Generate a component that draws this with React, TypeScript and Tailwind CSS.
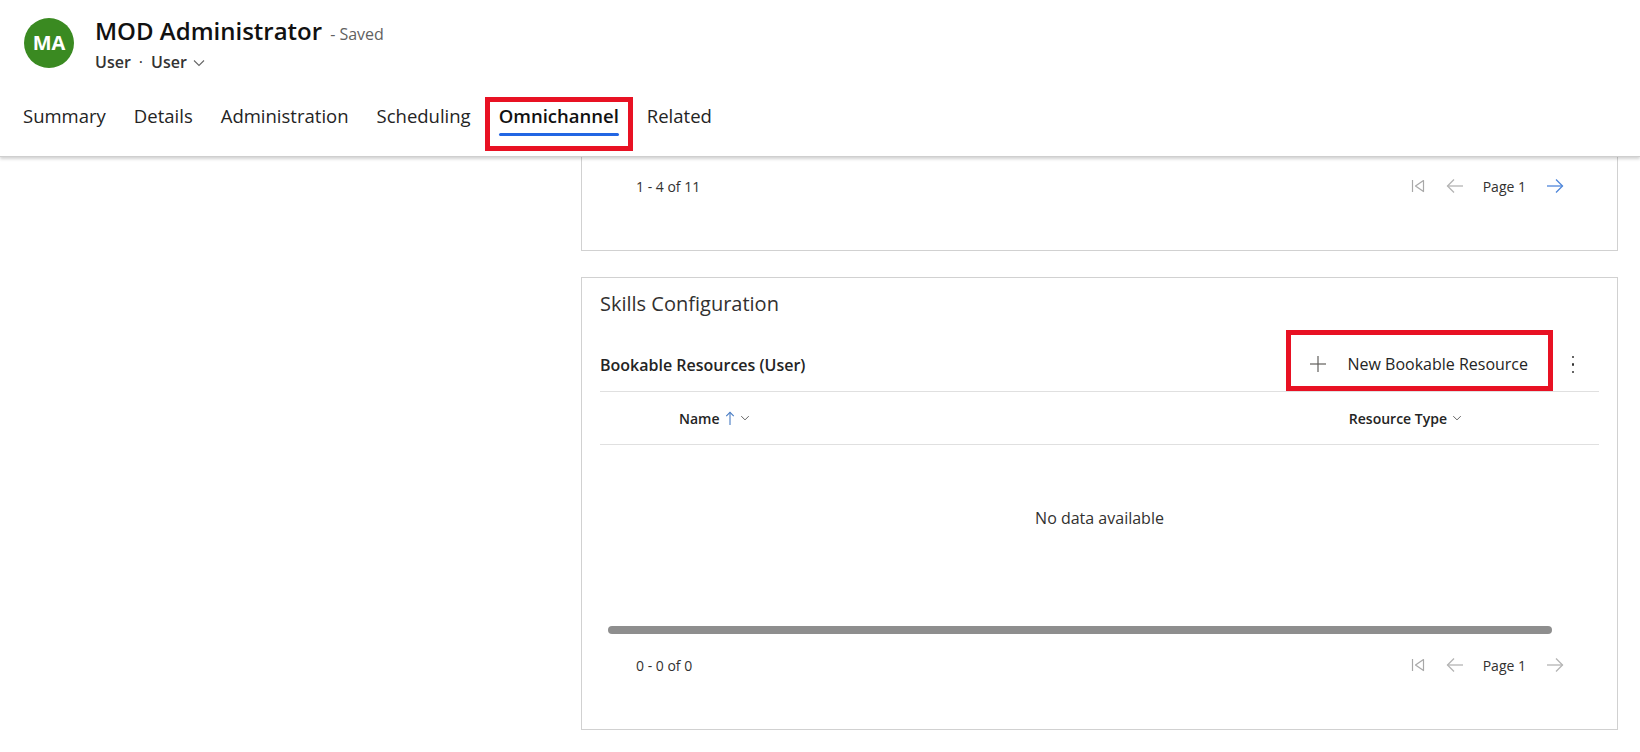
import React from 'react'

const tabs = ['Summary', 'Details', 'Administration', 'Scheduling', 'Omnichannel', 'Related']

const font = { fontFamily: '"Open Sans", "Noto Sans", sans-serif' }

function Chevron({ className = '' }: { className?: string }) {
  return (
    <svg viewBox="0 0 12 8" className={className} fill="none" stroke="currentColor" strokeWidth="1.1">
      <polyline points="1,1.5 6,6.5 11,1.5" />
    </svg>
  )
}

function Pager({ nextEnabled }: { nextEnabled: boolean }) {
  return (
    <div className="flex items-center text-[14px] text-[#323130]">
      <svg viewBox="0 0 14 16" className="h-[16px] w-[14px] text-[#a8a8a8]" fill="none" stroke="currentColor" strokeWidth="1.2">
        <line x1="1.5" y1="2" x2="1.5" y2="14" />
        <polygon points="12.5,2.5 4.5,8 12.5,13.5" strokeLinejoin="round" />
      </svg>
      <svg viewBox="0 0 18 16" className="ml-[21px] h-[16px] w-[18px] text-[#b4b4b4]" fill="none" stroke="currentColor" strokeWidth="1.3">
        <line x1="1.5" y1="8" x2="17" y2="8" />
        <polyline points="8,1.5 1.5,8 8,14.5" />
      </svg>
      <span className="ml-[19px]">Page 1</span>
      <svg
        viewBox="0 0 18 16"
        className={`ml-[20px] h-[16px] w-[18px] ${nextEnabled ? 'text-[#4f86da]' : 'text-[#b4b4b4]'}`}
        fill="none"
        stroke="currentColor"
        strokeWidth="1.3"
      >
        <line x1="1" y1="8" x2="16.5" y2="8" />
        <polyline points="10,1.5 16.5,8 10,14.5" />
      </svg>
    </div>
  )
}

function Footer({ label, nextEnabled }: { label: string; nextEnabled: boolean }) {
  return (
    <div className="flex h-[40px] items-center justify-between pl-[36px] pr-[35px]">
      <span className="text-[14px] text-[#323130]">{label}</span>
      <Pager nextEnabled={nextEnabled} />
    </div>
  )
}

export default function App() {
  return (
    <div className="min-h-[752px] bg-white text-[#242424]" style={font}>
      <header className="relative z-10 h-[157px] border-b border-[#cfcfcf] bg-white shadow-[0_2px_3px_rgba(0,0,0,0.18)]">
        <div className="flex pl-[24px] pt-[15px]">
          <div className="mt-[3px] flex h-[50px] w-[50px] items-center justify-center rounded-full bg-[#3a8a21] text-[20px] font-bold text-white">
            MA
          </div>
          <div className="ml-[21px]">
            <div className="flex items-baseline">
              <h1 className="text-[24px] font-semibold leading-[32px] text-[#111]">MOD Administrator</h1>
              <span className="ml-[8px] text-[16px] text-[#616161]">- Saved</span>
            </div>
            <div className="mt-[4px] flex items-center text-[16px] font-semibold leading-[22px] text-[#333]">
              <span>User</span>
              <span className="mx-[8px] font-normal">·</span>
              <span>User</span>
              <Chevron className="ml-[6px] mt-[1px] h-[8px] w-[12px] text-[#666]" />
            </div>
          </div>
        </div>
        <nav className="mt-[24px] flex pl-[9px]">
          {tabs.map((t) => {
            const active = t === 'Omnichannel'
            return (
              <div
                key={t}
                className={`flex h-[54px] flex-col border-[5px] px-[9px] ${active ? 'border-[#e81123]' : 'border-transparent'}`}
              >
                <span className={`text-[18.5px] leading-[28px] ${active ? 'font-semibold text-[#111]' : 'text-[#242424]'}`}>{t}</span>
                <div className={`mt-[3px] h-[3px] rounded-full ${active ? 'bg-[#2266e3]' : 'bg-transparent'}`} />
              </div>
            )
          })}
        </nav>
      </header>

      <main className="flex gap-[20px] pl-[20px] pr-[22px]">
        <div className="w-[541px] shrink-0" />
        <div className="flex-1">
          <section className="border-x border-b border-[#d1d1d1] px-[18px] pb-[44px] pt-[9px]">
            <Footer label="1 - 4 of 11" nextEnabled />
          </section>

          <section className="mt-[26px] border border-[#d1d1d1] px-[18px] pb-[44px] pt-[12px]">
            <h2 className="text-[20px] leading-[28px] text-[#323130]">Skills Configuration</h2>
            <div className="mt-[12px] flex h-[61px] items-center">
              <span className="mt-[8px] flex-1 text-[16px] font-semibold text-[#242424]">Bookable Resources (User)</span>
              <button className="flex h-[61px] items-center border-[5px] border-[#e81123] pl-[18px] pr-[20px] pt-[6px] text-[16px] text-[#242424]">
                <svg viewBox="0 0 18 18" className="h-[18px] w-[18px] text-[#605e5c]" fill="none" stroke="currentColor" strokeWidth="1.2">
                  <line x1="9" y1="1" x2="9" y2="17" />
                  <line x1="1" y1="9" x2="17" y2="9" />
                </svg>
                <span className="ml-[20px]">New Bookable Resource</span>
              </button>
              <div className="ml-[4px] mr-[10px] mt-[8px] flex w-[32px] flex-col items-center gap-[5px]">
                <span className="h-[2.5px] w-[2.5px] rounded-full bg-[#333]" />
                <span className="h-[2.5px] w-[2.5px] rounded-full bg-[#333]" />
                <span className="h-[2.5px] w-[2.5px] rounded-full bg-[#333]" />
              </div>
            </div>
            <div className="flex h-[54px] items-center border-y border-[#e0e0e0] text-[14px] font-semibold text-[#242424]">
              <div className="flex items-center pl-[79px]">
                <span>Name</span>
                <svg viewBox="0 0 10 16" className="ml-[5px] h-[15px] w-[10px] text-[#4a7dc4]" fill="none" stroke="currentColor" strokeWidth="1.2">
                  <line x1="5" y1="1.5" x2="5" y2="15" />
                  <polyline points="1,5.5 5,1.5 9,5.5" />
                </svg>
                <Chevron className="ml-[5px] h-[6px] w-[10px] text-[#444]" />
              </div>
              <div className="ml-auto mr-[137px] flex items-center">
                <span>Resource Type</span>
                <Chevron className="ml-[5px] h-[6px] w-[10px] text-[#444]" />
              </div>
            </div>
            <div className="flex h-[146px] items-center justify-center text-[16px] text-[#323130]">No data available</div>
            <div className="ml-[8px] mr-[47px] mt-[35px] h-[8px] rounded-full bg-[#8e8e8e]" />
            <div className="mt-[11px]">
              <Footer label="0 - 0 of 0" nextEnabled={false} />
            </div>
          </section>
        </div>
      </main>
    </div>
  )
}
